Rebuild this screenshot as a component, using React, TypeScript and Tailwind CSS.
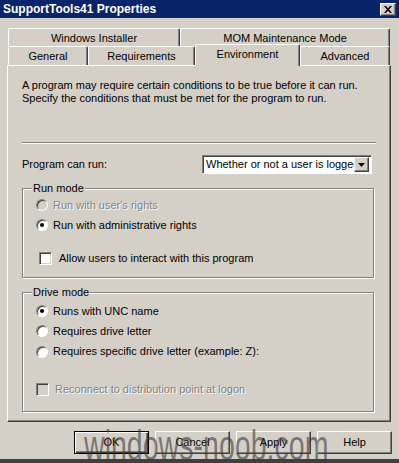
import React from 'react';

// Classic Windows property sheet – "Environment" tab

const font = "font-['Liberation_Sans',Arial,sans-serif]";

const Radio = ({ checked = false, disabled = false }: { checked?: boolean; disabled?: boolean }) => (
  <span
    className={`relative flex h-[12px] w-[12px] shrink-0 items-center justify-center rounded-full border border-t-[#808080] border-l-[#808080] border-b-white border-r-white ${
      disabled ? 'bg-[#d4d0c8]' : 'bg-white'
    } shadow-[inset_1px_1px_0_#404040]`}
  >
    {checked && <span className="h-[4px] w-[4px] rounded-full bg-black" />}
  </span>
);

const Checkbox = ({ disabled = false }: { disabled?: boolean }) => (
  <span
    className={`block h-[13px] w-[13px] shrink-0 border border-t-[#808080] border-l-[#808080] border-b-white border-r-white shadow-[inset_1px_1px_0_#404040,inset_-1px_-1px_0_#d4d0c8] ${
      disabled ? 'bg-[#d4d0c8]' : 'bg-white'
    }`}
  />
);

const disabledText = 'text-[#808080] [text-shadow:1px_1px_0_#ffffff]';

interface TabProps {
  label: string;
  width: string;
  selected?: boolean;
}

const Tab = ({ label, width, selected }: TabProps) => (
  <div
    className={`${width} flex items-center justify-center rounded-t-[2px] border-l border-t border-l-white border-t-white border-r border-r-[#404040] shadow-[inset_-1px_0_0_#808080] bg-[#d4d0c8] ${
      selected ? 'relative z-10 -mb-px h-[22px] pb-[3px]' : 'h-[19px]'
    }`}
  >
    {label}
  </div>
);

const Button = ({ label, isDefault }: { label: string; isDefault?: boolean }) => (
  <button
    className={`h-[23px] w-[75px] bg-[#d4d0c8] ${
      isDefault
        ? 'border border-black shadow-[inset_1px_1px_0_#ffffff,inset_-1px_-1px_0_#404040,inset_-2px_-2px_0_#808080]'
        : 'border border-t-white border-l-white border-b-[#404040] border-r-[#404040] shadow-[inset_-1px_-1px_0_#808080]'
    }`}
  >
    {label}
  </button>
);

const groupBox =
  'border border-[#808080] shadow-[inset_1px_1px_0_#ffffff,1px_1px_0_#ffffff] px-[13px]';

export default function App() {
  return (
    <div className={`${font} relative flex h-[463px] w-[399px] flex-col overflow-hidden bg-[#d4d0c8] text-[11px] leading-[13px] text-black`}>
      {/* title bar */}
      <div className="flex h-[18px] items-center justify-between bg-[#0a246a] pl-[3px] pr-[3px]">
        <span className="text-[12px] font-bold text-white">SupportTools41 Properties</span>
        <span className="flex h-[13px] w-[16px] items-center justify-center border border-t-white border-l-white border-b-[#404040] border-r-[#404040] bg-[#d4d0c8] shadow-[inset_-1px_-1px_0_#808080]">
          <svg width="8" height="7" viewBox="0 0 8 7">
            <path d="M0 0h2l2 2.5L6 0h2L5 3.5 8 7H6L4 4.5 2 7H0l3-3.5z" fill="#000" />
          </svg>
        </span>
      </div>

      {/* tabs */}
      <div className="ml-[8px] mt-[10px] w-[382px]">
        <div className="flex h-[18px]">
          <Tab label="Windows Installer" width="w-[172px]" />
          <Tab label="MOM Maintenance Mode" width="w-[210px]" />
        </div>
        <div className="flex h-[19px] items-end">
          <Tab label="General" width="w-[80px]" />
          <Tab label="Requirements" width="w-[107px]" />
          <Tab label="Environment" width="w-[105px]" selected />
          <Tab label="Advanced" width="w-[90px]" />
        </div>
      </div>

      {/* panel */}
      <div className="ml-[7px] h-[357px] w-[384px] border border-t-white border-l-white border-b-[#404040] border-r-[#404040] shadow-[inset_-1px_-1px_0_#808080] pl-[14px] pr-[16px] pt-[13px]">
        <p>A program may require certain conditions to be true before it can run.</p>
        <p>Specify the conditions that must be met for the program to run.</p>

        <div className="mt-[37px] h-[2px] w-[354px] border-t border-t-[#808080] border-b border-b-white" />

        <div className="mt-[11px] flex h-[19px] items-center justify-between pr-[2px]">
          <span>Program can run:</span>
          <div className="flex h-[19px] w-[170px] items-center border border-t-[#808080] border-l-[#808080] border-b-white border-r-white bg-white shadow-[inset_1px_1px_0_#404040] pl-[3px] pr-[2px]">
            <span className="flex-1 overflow-hidden whitespace-nowrap">Whether or not a user is logged on</span>
            <span className="flex h-[15px] w-[15px] shrink-0 items-center justify-center border border-t-white border-l-white border-b-[#404040] border-r-[#404040] bg-[#d4d0c8] shadow-[inset_-1px_-1px_0_#808080]">
              <svg width="7" height="4" viewBox="0 0 7 4">
                <path d="M0 0h7L3.5 4z" fill="#000" />
              </svg>
            </span>
          </div>
        </div>

        {/* run mode */}
        <fieldset className={`mt-[8px] w-[352px] pb-[9px] ${groupBox}`}>
          <legend className="-ml-[4px] bg-[#d4d0c8] px-[1px]">Run mode</legend>
          <div className="flex h-[20px] items-center gap-[5px]">
            <Radio disabled />
            <span className={disabledText}>Run with user's rights</span>
          </div>
          <div className="flex h-[20px] items-center gap-[5px]">
            <Radio checked />
            <span>Run with administrative rights</span>
          </div>
          <div className="mt-[14px] flex h-[19px] items-center gap-[7px] pl-[3px]">
            <Checkbox />
            <span>Allow users to interact with this program</span>
          </div>
        </fieldset>

        {/* drive mode */}
        <fieldset className={`mt-[8px] w-[352px] pb-[12px] ${groupBox}`}>
          <legend className="-ml-[4px] bg-[#d4d0c8] px-[1px]">Drive mode</legend>
          <div className="mt-[2px] flex h-[20px] items-center gap-[5px]">
            <Radio checked />
            <span>Runs with UNC name</span>
          </div>
          <div className="flex h-[20px] items-center gap-[5px]">
            <Radio />
            <span>Requires drive letter</span>
          </div>
          <div className="flex h-[21px] items-center gap-[5px]">
            <Radio />
            <span>Requires specific drive letter (example: Z):</span>
          </div>
          <div className="mt-[18px] flex h-[19px] items-center gap-[6px]">
            <Checkbox disabled />
            <span className={disabledText}>Reconnect to distribution point at logon</span>
          </div>
        </fieldset>
      </div>

      {/* buttons */}
      <div className="mt-[9px] flex justify-end gap-[6px] pr-[7px]">
        <Button label="OK" isDefault />
        <Button label="Cancel" />
        <Button label="Apply" />
        <Button label="Help" />
      </div>

      <div className="flex-1" />
      <div className="h-[4px] bg-[#404040]" />

      {/* watermark */}
      <span className="pointer-events-none absolute left-[84px] top-[425px] origin-left scale-x-[0.68] whitespace-nowrap text-[42px] leading-[42px] text-[#3a3a3a]/60">
        windows-noob.com
      </span>
    </div>
  );
}
